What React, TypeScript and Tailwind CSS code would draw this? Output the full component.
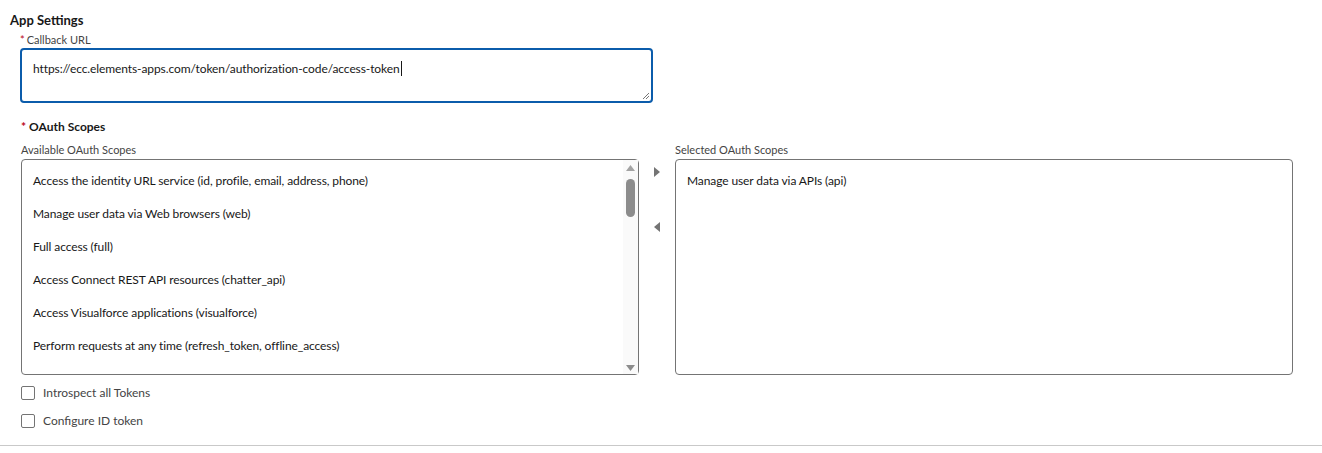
import React from "react";

const available = [
  "Access the identity URL service (id, profile, email, address, phone)",
  "Manage user data via Web browsers (web)",
  "Full access (full)",
  "Access Connect REST API resources (chatter_api)",
  "Access Visualforce applications (visualforce)",
  "Perform requests at any time (refresh_token, offline_access)",
];

function Checkbox({ label }: { label: string }) {
  return (
    <label className="flex h-[28px] items-center gap-[8px]">
      <span className="h-[14px] w-[14px] rounded-[2px] border border-[#747474] bg-white" />
      <span className="text-[12px] text-[#444444]">{label}</span>
    </label>
  );
}

export default function App() {
  const font = { fontFamily: "Lato, 'Noto Sans', sans-serif" };
  return (
    <div className="h-[453px] w-[1322px] bg-white text-[#181818]" style={font}>
      <div className="px-[10px] pt-[11px]">
        <h2 className="text-[13px] font-bold leading-[18px]">App Settings</h2>

        {/* Callback URL */}
        <div className="pl-[10px] pt-[4px]">
          <div className="flex items-center text-[11px] leading-[14px] text-[#444444]">
            <span className="mr-[2px] text-[#ba0517]">*</span>Callback URL
          </div>
          <div className="relative mt-[1px] h-[55px] w-[633px] rounded-[4px] border-2 border-[#0b5cab] px-[11px] pt-[5px]">
            <span className="text-[12px] leading-[18px] tracking-[-0.1px]">
              https://ecc.elements-apps.com/token/authorization-code/access-token
            </span>
            <span className="ml-[1px] inline-block h-[15px] w-px translate-y-[3px] bg-[#181818]" />
            <svg className="absolute bottom-[1px] right-[1px] h-[9px] w-[9px]" viewBox="0 0 9 9">
              <path d="M8 2L2 8M8 5L5 8" stroke="#777" strokeWidth="1" />
            </svg>
          </div>
        </div>

        {/* OAuth Scopes */}
        <div className="pl-[11px] pt-[16px]">
          <div className="text-[12px] font-bold leading-[16px]">
            <span className="mr-[3px] text-[#ba0517]">*</span>OAuth Scopes
          </div>
          <div className="mt-[8px] flex">
            <div className="w-[618px]">
              <div className="text-[11px] leading-[14px] text-[#444444]">Available OAuth Scopes</div>
              <div className="mt-[2px] flex h-[216px] rounded-[4px] border border-[#747474]">
                <ul className="flex-1 overflow-hidden pl-[11px] pt-[12px]">
                  {available.map((s) => (
                    <li key={s} className="h-[33px] text-[12px] leading-[18px] tracking-[-0.1px]">
                      {s}
                    </li>
                  ))}
                </ul>
                <div className="flex w-[15px] flex-col items-center bg-[#fafafa] pt-[5px] pb-[3px]">
                  <svg className="h-[6px] w-[9px]" viewBox="0 0 9 6">
                    <path d="M4.5 0L9 6H0z" fill="#a3a3a3" />
                  </svg>
                  <div className="mt-[8px] h-[38px] w-[9px] rounded-full bg-[#8c8c8c]" />
                  <div className="flex-1" />
                  <svg className="h-[6px] w-[9px]" viewBox="0 0 9 6">
                    <path d="M0 0H9L4.5 6z" fill="#8c8c8c" />
                  </svg>
                </div>
              </div>
            </div>

            <div className="flex w-[36px] flex-col items-center pt-[24px]">
              <svg className="h-[10px] w-[6px]" viewBox="0 0 6 10">
                <path d="M0 0L6 5L0 10z" fill="#747474" />
              </svg>
              <svg className="mt-[45px] h-[10px] w-[6px]" viewBox="0 0 6 10">
                <path d="M6 0L0 5L6 10z" fill="#747474" />
              </svg>
            </div>

            <div className="w-[618px]">
              <div className="text-[11px] leading-[14px] text-[#444444]">Selected OAuth Scopes</div>
              <div className="mt-[2px] h-[216px] rounded-[4px] border border-[#747474] pl-[11px] pt-[12px]">
                <div className="text-[12px] leading-[18px] tracking-[-0.1px]">Manage user data via APIs (api)</div>
              </div>
            </div>
          </div>

          <div className="mt-[4px]">
            <Checkbox label="Introspect all Tokens" />
            <Checkbox label="Configure ID token" />
          </div>
        </div>
      </div>
      <div className="mt-[10px] h-px w-full bg-[#c9c9c9]" />
    </div>
  );
}
